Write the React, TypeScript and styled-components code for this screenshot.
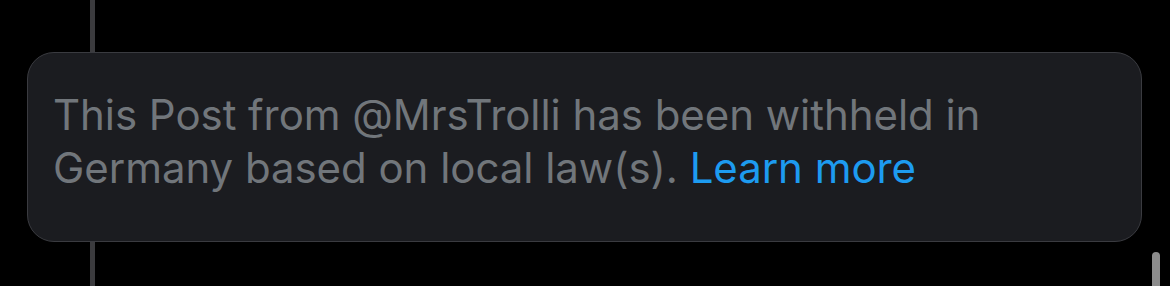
import styled, { createGlobalStyle } from 'styled-components';

const GlobalStyle = createGlobalStyle`
    html, body {
        margin: 0;
        padding: 0;
        background: #000000;
    }
    body {
        font-family: Inter, 'Noto Sans', sans-serif;
        -webkit-font-smoothing: antialiased;
    }
`;

const App = () => {
    return (
        <>
            <GlobalStyle />
            <Page>
                <Thread />
                <Notice>
                    <Message>
                        This Post from @MrsTrolli has been withheld in
                        <br />
                        Germany based on local law(s). <LearnMore href="#">Learn more</LearnMore>
                    </Message>
                </Notice>
                <Thread $grow />
                <Scrollbar />
            </Page>
        </>
    );
};

const Page = styled.div`
    position: relative;
    display: flex;
    flex-direction: column;
    width: 1170px;
    height: 286px;
    overflow: hidden;
    background: #000000;
`;

// 스레드 연결선
const Thread = styled.div<{ $grow?: boolean }>`
    width: 5px;
    margin-left: 90px;
    height: ${(p) => (p.$grow ? 'auto' : '52px')};
    flex: ${(p) => (p.$grow ? '1' : 'none')};
    background: #3b3b3e;
`;

const Notice = styled.div`
    margin-left: 27px;
    width: 1115px;
    box-sizing: border-box;
    height: 190px;
    padding: 35px 25px 0;
    background: #1b1c20;
    border: 1px solid #3a3b40;
    border-radius: 27px;
`;

const Message = styled.p`
    margin: 0;
    font-size: 42px;
    line-height: 53px;
    color: #71767b;
    letter-spacing: -0.05px;
`;

const LearnMore = styled.a`
    color: #1d9bf0;
    text-decoration: none;
`;

const Scrollbar = styled.div`
    position: absolute;
    right: 10px;
    top: 252px;
    width: 8px;
    height: 60px;
    border-radius: 4px;
    background: #8c8c8c;
`;

export default App;
